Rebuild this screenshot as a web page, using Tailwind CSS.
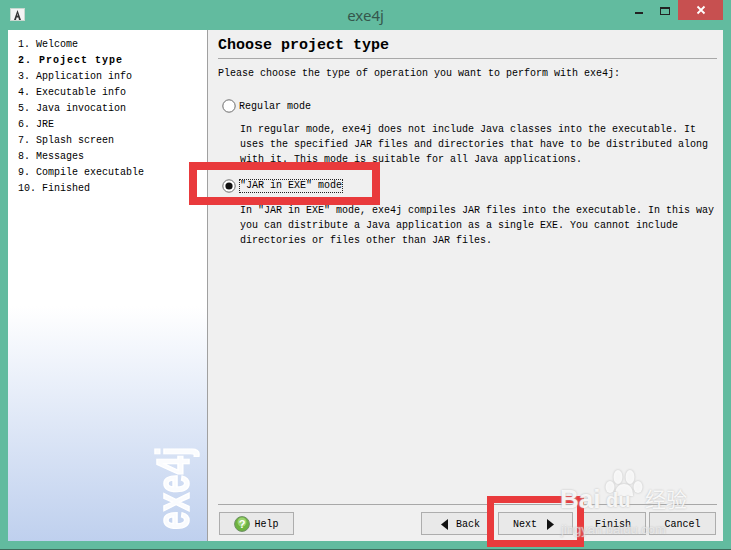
<!DOCTYPE html>
<html>
<head>
<script src="https://cdn.jsdelivr.net/npm/@tailwindcss/browser@4"></script>
</head>
<body class="m-0">
<div class="relative w-[731px] h-[550px] overflow-hidden bg-[#62bb9f] flex flex-col font-['Liberation_Mono',monospace] text-[10px] text-[#000] border-b border-[#3f6b5c]">
  <!-- title bar -->
  <div class="h-[30px] shrink-0 flex items-start justify-between relative">
    <div class="mt-[8px] ml-[10px] w-[15px] h-[13px] bg-[#f4f4f4] border border-[#c8d8d0] flex items-center justify-center">
      <svg width="9" height="10" viewBox="0 0 9 10"><path d="M4.5 0 L8 10 H6 L5.4 7.5 H3.6 L3 10 H1 Z M4 5.5 H5 L4.5 3.5 Z" fill="#333" fill-rule="evenodd"/></svg>
    </div>
    <div class="absolute inset-x-0 top-[5px] text-center font-['Noto_Sans',sans-serif] text-[15px] leading-[20px] text-[#35574c]">exe4j</div>
    <div class="flex items-start relative">
      <div class="w-[8px] h-[2px] mt-[12px] mr-[17px] bg-[#222]"></div>
      <div class="w-[8px] h-[5px] mt-[7px] mr-[8px] border border-[#222] border-t-2 box-content"></div>
      <div class="w-[45px] h-[20px] mr-[8px] bg-[#c75050] flex items-center justify-center">
        <svg width="10" height="10" viewBox="0 0 10 10"><path d="M1.5 1.5 L8.5 8.5 M8.5 1.5 L1.5 8.5" stroke="#fff" stroke-width="1.8"/></svg>
      </div>
    </div>
  </div>
  <!-- content -->
  <div class="h-[511px] mx-[8px] flex shrink-0">
    <aside class="relative w-[200px] shrink-0 pt-[7px] pl-[10px] bg-gradient-to-b from-white from-[54%] to-[#bfd0ee] border-r border-[#a0a0a0]">
      <ol class="leading-[16px]">
        <li class="whitespace-pre h-[16px]">1. Welcome</li>
        <li class="whitespace-pre h-[16px] font-bold tracking-[1px]">2. Project type</li>
        <li class="whitespace-pre h-[16px]">3. Application info</li>
        <li class="whitespace-pre h-[16px]">4. Executable info</li>
        <li class="whitespace-pre h-[16px]">5. Java invocation</li>
        <li class="whitespace-pre h-[16px]">6. JRE</li>
        <li class="whitespace-pre h-[16px]">7. Splash screen</li>
        <li class="whitespace-pre h-[16px]">8. Messages</li>
        <li class="whitespace-pre h-[16px]">9. Compile executable</li>
        <li class="whitespace-pre h-[16px]">10. Finished</li>
      </ol>
      <div class="absolute left-[143px] bottom-[9px] h-[88px] w-[44px] flex items-center justify-center [writing-mode:vertical-rl] rotate-180 font-['Liberation_Sans',sans-serif] font-bold text-[46px] leading-[44px] text-white/90 scale-y-[.72] [-webkit-text-stroke:1.5px_white]">exe4j</div>
    </aside>
    <main class="flex-1 bg-[#f0f0f0] flex flex-col pl-[10px] pr-[6px] min-w-0">
      <h1 class="font-bold text-[15px] leading-[20px] pt-[6px] border-b border-[#a8a8a8] h-[29px] box-border">Choose project type</h1>
      <p class="mt-[6px] pt-[1px] leading-[15px]">Please choose the type of operation you want to perform with exe4j:</p>
      <div class="mt-[17px] flex items-center h-[16px] ml-[4px] gap-[3px]">
        <svg width="14" height="14" viewBox="0 0 14 14"><circle cx="7" cy="7" r="6.2" fill="#fff" stroke="#6b6b6b"/></svg>
        <span>Regular mode</span>
      </div>
      <p class="mt-[8px] ml-[22px] leading-[15px] whitespace-pre">In regular mode, exe4j does not include Java classes into the executable. It
uses the specified JAR files and directories that have to be distributed along
with it. This mode is suitable for all Java applications.</p>
      <div class="mt-[11px] flex items-center h-[16px] ml-[4px] gap-[3px]">
        <svg width="14" height="14" viewBox="0 0 14 14"><circle cx="7" cy="7" r="6.2" fill="#fff" stroke="#6b6b6b"/><circle cx="7" cy="7" r="3.6" fill="#111"/></svg>
        <span class="border border-dotted border-[#222] leading-[12px]">"JAR in EXE" mode</span>
      </div>
      <p class="mt-[9px] ml-[22px] leading-[15px] whitespace-pre">In "JAR in EXE" mode, exe4j compiles JAR files into the executable. In this way
you can distribute a Java application as a single EXE. You cannot include
directories or files other than JAR files.</p>
      <div class="mt-auto border-t border-[#a8a8a8] pt-[7px] h-[37px] flex">
        <button class="w-[75px] h-[23px] pt-[1px] ml-[1px] border border-[#adadad] bg-[#e9e9e9] flex items-center justify-center gap-[4px]">
          <svg width="16" height="16" viewBox="0 0 16 16"><circle cx="8" cy="8" r="7.4" fill="#6db33f" stroke="#6f8f68"/><circle cx="8" cy="6" r="4.5" fill="#9bd36f"/><text x="8" y="12" text-anchor="middle" font-size="11" font-weight="bold" fill="#fff" font-family="Liberation Sans">?</text></svg>
          <span>Help</span>
        </button>
        <button class="ml-auto w-[73px] h-[23px] pt-[1px] pl-[6px] border border-[#adadad] bg-[#e9e9e9] flex items-center justify-center gap-[8px]">
          <svg width="7" height="11" viewBox="0 0 7 11"><path d="M7 0 V11 L0 5.5 Z" fill="#111"/></svg>
          <span>Back</span>
        </button>
        <button class="ml-[4px] w-[75px] h-[23px] pt-[1px] pr-[4px] border border-[#adadad] bg-[#e9e9e9] flex items-center justify-center gap-[10px]">
          <span>Next</span>
          <svg width="7" height="11" viewBox="0 0 7 11"><path d="M0 0 V11 L7 5.5 Z" fill="#111"/></svg>
        </button>
        <button class="ml-[7px] w-[66px] h-[23px] pt-[1px] border border-[#adadad] bg-[#e9e9e9]">Finish</button>
        <button class="ml-[3px] mr-[1px] w-[67px] h-[23px] pt-[1px] border border-[#adadad] bg-[#e9e9e9]">Cancel</button>
      </div>
    </main>
  </div>
  <!-- annotations -->
  <div class="absolute left-[189px] top-[162px] w-[191px] h-[43px] border-[8px] border-[#e93a3c]"></div>
  <div class="absolute left-[487px] top-[496px] w-[97px] h-[51px] border-[7px] border-[#e93a3c]"></div>
  <!-- watermark -->
  <div class="absolute left-[560px] top-[486px] w-[170px] h-[60px] text-white/85 font-['Liberation_Sans',sans-serif] [text-shadow:0_0_2px_#b5b5b5]">
    <svg class="absolute left-[45px] top-[-16px] drop-shadow-[0_0_1px_#b5b5b5]" width="38" height="26" viewBox="0 0 38 26" fill="currentColor"><path d="M10 26 C10 17 14 14 19 14 C24 14 28 17 28 26 Z"/><ellipse cx="5" cy="17" rx="4.5" ry="6"/><ellipse cx="13" cy="7" rx="4.5" ry="7"/><ellipse cx="25" cy="7" rx="4.5" ry="7"/><ellipse cx="33" cy="17" rx="4.5" ry="6"/></svg>
    <span class="absolute left-0 top-[-1px] text-[26px] font-bold leading-[28px]">Bai</span>
    <span class="absolute left-[46px] top-[4px] text-[20px] font-bold leading-[20px]">du</span>
    <span class="absolute left-[85px] top-[0px] text-[21px] leading-[24px] font-['Noto_Sans_CJK_SC',sans-serif]">经验</span>
    <span class="absolute left-[1px] top-[37px] text-[13px] leading-[14px] text-white/50">jingyan.baidu.com</span>
  </div>
</div>
</body>
</html>
